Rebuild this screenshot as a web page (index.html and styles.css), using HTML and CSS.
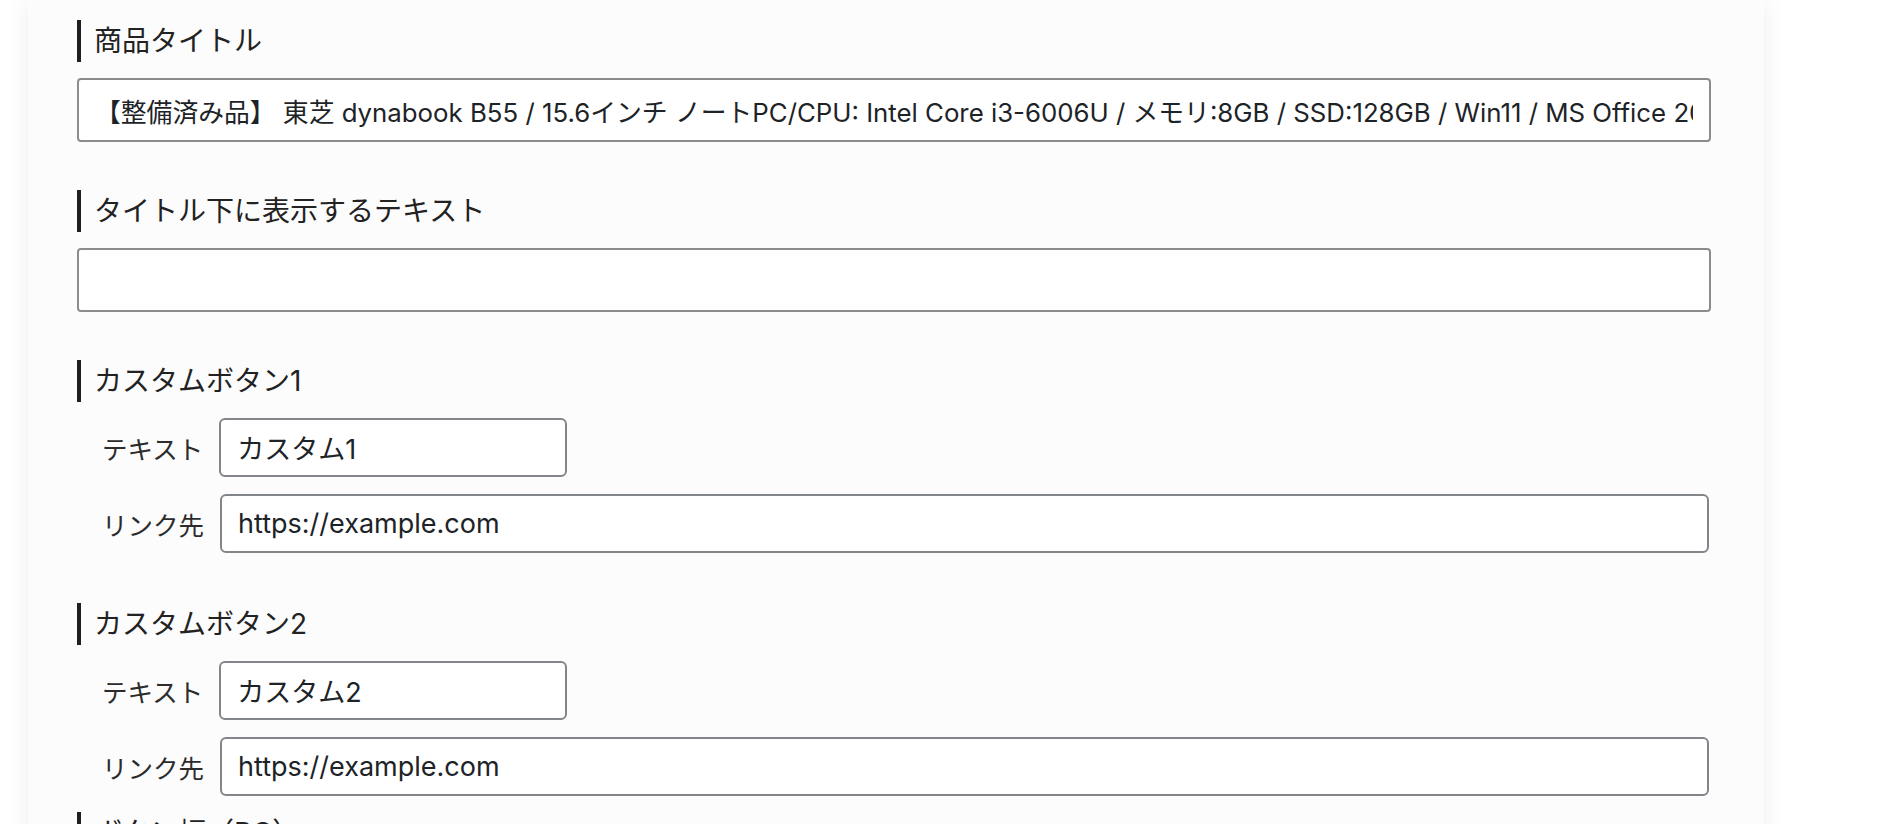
FILE: index.html
```html
<!DOCTYPE html>
<html lang="ja">
<head>
<meta charset="utf-8">
<title>商品編集</title>
<link rel="stylesheet" href="styles.css">
</head>
<body>
<div class="page">
  <main class="panel">
    <section class="block">
      <h2 class="block-title">商品タイトル</h2>
      <input class="field-lg" type="text" value="【整備済み品】 東芝 dynabook B55 / 15.6インチ ノートPC/CPU: Intel Core i3-6006U / メモリ:8GB / SSD:128GB / Win11 / MS Office 2021 / WPS Office">
    </section>

    <section class="block">
      <h2 class="block-title">タイトル下に表示するテキスト</h2>
      <input class="field-lg" type="text" value="">
    </section>

    <section class="block block-btn1">
      <h2 class="block-title">カスタムボタン1</h2>
      <div class="rows">
        <div class="row">
          <span class="row-label">テキスト</span>
          <input class="field-sm field-short" type="text" value="カスタム1">
        </div>
        <div class="row">
          <span class="row-label">リンク先</span>
          <input class="field-sm field-wide" type="text" value="https://example.com">
        </div>
      </div>
    </section>

    <section class="block block-btn2">
      <h2 class="block-title">カスタムボタン2</h2>
      <div class="rows">
        <div class="row">
          <span class="row-label">テキスト</span>
          <input class="field-sm field-short" type="text" value="カスタム2">
        </div>
        <div class="row">
          <span class="row-label">リンク先</span>
          <input class="field-sm field-wide" type="text" value="https://example.com">
        </div>
      </div>
    </section>

    <section class="block">
      <h2 class="block-title">ボタン幅（PC）</h2>
      <input class="field-lg" type="text" value="">
    </section>
  </main>
</div>
</body>
</html>
```

FILE: styles.css
```css
* {
  box-sizing: border-box;
}

html, body {
  margin: 0;
  padding: 0;
  background: #ffffff;
  height: 100%;
  overflow: hidden;
}

body {
  font-family: Inter, "Noto Sans CJK JP", sans-serif;
  color: #1d2327;
}

.page {
  display: flex;
  padding-left: 28px;
}

.panel {
  width: 1736px;
  background: #fcfcfc;
  box-shadow: 0 0 22px rgba(0, 0, 0, 0.07);
  padding: 20px 53px 40px 49px;
  min-height: 1000px;
}

.block {
  display: flex;
  flex-direction: column;
  margin-bottom: 48px;
}

.block-btn1 {
  margin-bottom: 50px;
}

.block-btn2 {
  margin-bottom: 16px;
}

.block-title {
  margin: 0 0 16px 0;
  height: 42px;
  line-height: 42px;
  border-left: 4px solid #1f1f1f;
  padding-left: 13px;
  font-size: 28px;
  font-weight: 400;
  color: #222;
  font-family: Inter, "Noto Sans CJK JP", sans-serif;
  white-space: nowrap;
}

.field-lg {
  display: block;
  width: 100%;
  height: 64px;
  border: 2px solid #8c8c8c;
  border-radius: 4px;
  background: #ffffff;
  padding: 0 16px;
  font-family: Inter, "Noto Sans CJK JP", sans-serif;
  font-size: 25.8px;
  color: #1d2327;
  outline: none;
}

.rows {
  display: flex;
  flex-direction: column;
  gap: 17px;
  padding-left: 25px;
}

.row {
  display: flex;
  align-items: center;
  gap: 16px;
}

.row-label {
  flex: 0 0 auto;
  white-space: nowrap;
  font-size: 25.5px;
  color: #2c2c2c;
}

.field-sm {
  display: block;
  height: 59px;
  border: 2px solid #82868b;
  border-radius: 6px;
  background: #ffffff;
  padding: 0 16px;
  font-family: Inter, "Noto Sans CJK JP", sans-serif;
  font-size: 27px;
  color: #1d2327;
  outline: none;
}

.field-short {
  width: 348px;
}

.field-wide {
  flex: 1;
  margin-right: 2px;
}
```
